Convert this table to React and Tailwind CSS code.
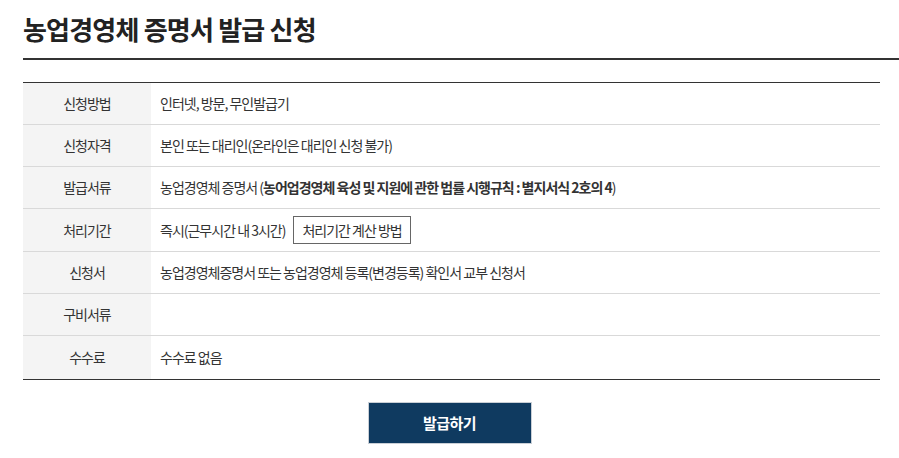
export default function App() {
  const rows = [
    { th: "신청방법", td: <span>인터넷, 방문, 무인발급기</span>, h: "h-[42px]" },
    { th: "신청자격", td: <span>본인 또는 대리인(온라인은 대리인 신청 불가)</span>, h: "h-[42px]" },
    {
      th: "발급서류",
      td: (
        <span>
          농업경영체 증명서 (<b className="font-bold">농어업경영체 육성 및 지원에 관한 법률 시행규칙 : 별지서식 2호의 4</b>)
        </span>
      ),
      h: "h-[42px]",
    },
    {
      th: "처리기간",
      td: (
        <div className="flex items-center">
          <span>즉시(근무시간 내 3시간)</span>
          <button className="ml-[8px] h-[28px] px-[8px] border border-[#666] bg-white text-[14px] text-[#333] tracking-[-1px]">
            처리기간 계산 방법
          </button>
        </div>
      ),
      h: "h-[43px]",
    },
    { th: "신청서", td: <span>농업경영체증명서 또는 농업경영체 등록(변경등록) 확인서 교부 신청서</span>, h: "h-[42px]" },
    { th: "구비서류", td: <span></span>, h: "h-[42px]" },
    { th: "수수료", td: <span>수수료 없음</span>, h: "h-[43px]" },
  ];

  return (
    <div
      className="w-[899px] h-[458px] bg-white text-[#333]"
      style={{ fontFamily: '"Noto Sans CJK KR", "Noto Sans", sans-serif' }}
    >
      <div className="ml-[23px] h-[60px] border-b-2 border-[#333] flex items-center">
        <h1 className="text-[26px] font-bold tracking-[-0.8px] text-[#222] leading-none">
          농업경영체 증명서 발급 신청
        </h1>
      </div>

      <div className="ml-[23px] w-[857px] mt-[22px] border-t border-b border-[#333]">
        {rows.map((r, i) => (
          <div
            key={r.th}
            className={`flex ${r.h} ${i < rows.length - 1 ? "border-b border-[#d9d9d9]" : ""}`}
          >
            <div className="w-[128px] bg-[#f4f4f4] flex items-center justify-center text-[14px] tracking-[-1px] text-[#333]">
              {r.th}
            </div>
            <div className="flex-1 flex items-center pl-[9px] text-[14px] tracking-[-1px] text-[#333]">
              {r.td}
            </div>
          </div>
        ))}
      </div>

      <div className="flex justify-center mt-[22px]">
        <button className="w-[164px] h-[42px] bg-[#0f3a60] border border-[#c9cfd6] text-white text-[15px] font-bold tracking-[-0.5px]">
          발급하기
        </button>
      </div>
    </div>
  );
}
